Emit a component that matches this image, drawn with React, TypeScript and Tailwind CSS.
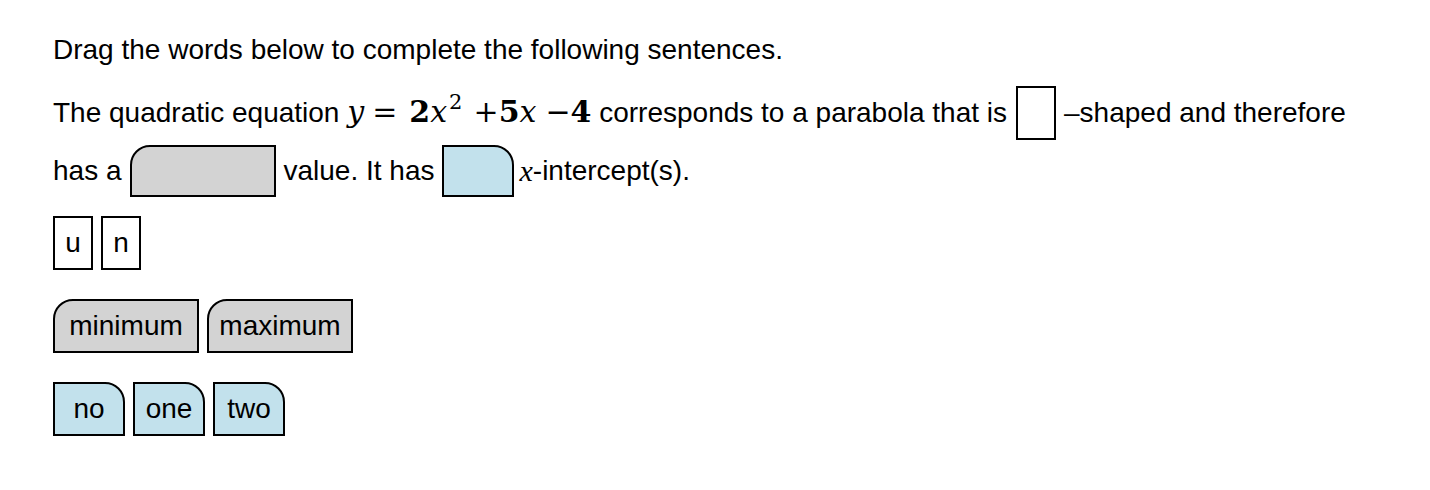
import React from "react";

const Box = ({ className = "", children }: { className?: string; children?: React.ReactNode }) => (
  <span className={`flex items-center justify-center border-2 border-black shrink-0 ${className}`}>{children}</span>
);

export default function App() {
  return (
    <div className="min-h-[490px] w-[1430px] bg-white font-['Liberation_Sans',Arial,sans-serif] text-[28px] text-black pl-[53px] pt-[33px]">
      <p className="leading-[34px] whitespace-pre">Drag the words below to complete the following sentences.</p>

      <div className="flex items-center h-[54px] mt-[19px] whitespace-pre leading-[32px]">
        <span>The quadratic equation </span>
        <span className="flex items-baseline font-['DejaVu_Serif',serif] text-[30px] leading-[32px]">
          <span className="italic">y</span>
          <span className="ml-[8px]">=</span>
          <span className="ml-[12px] font-bold">2</span>
          <span className="italic">x</span>
          <span className="text-[21px] relative -top-[13px] ml-[2px]">2</span>
          <span className="ml-[11px]">+</span>
          <span className="font-bold">5</span>
          <span className="italic">x</span>
          <span className="ml-[9px]">−</span>
          <span className="font-bold">4</span>
        </span>
        <span> corresponds to a parabola that is</span>
        <Box className="w-[40px] h-[54px] ml-[9px] mr-[8px] bg-white" />
        <span>–shaped and therefore</span>
      </div>

      <div className="flex items-center h-[52px] mt-[5px] whitespace-pre leading-[32px]">
        <span>has a</span>
        <Box className="w-[146px] h-[52px] mx-[8px] bg-[#d3d3d3] rounded-tl-[20px]" />
        <span>value. It has</span>
        <Box className="w-[72px] h-[52px] ml-[8px] mr-[5px] bg-[#c2e1ec] rounded-tr-[20px]" />
        <span className="font-['Liberation_Serif',serif] italic text-[30px]">x</span>
        <span>-intercept(s).</span>
      </div>

      <div className="flex gap-[8px] mt-[19px]">
        <Box className="w-[40px] h-[54px] bg-white">u</Box>
        <Box className="w-[40px] h-[54px] bg-white">n</Box>
      </div>

      <div className="flex gap-[8px] mt-[29px]">
        <Box className="w-[146px] h-[54px] bg-[#d3d3d3] rounded-tl-[20px]">minimum</Box>
        <Box className="w-[146px] h-[54px] bg-[#d3d3d3] rounded-tl-[20px]">maximum</Box>
      </div>

      <div className="flex gap-[8px] mt-[29px]">
        <Box className="w-[72px] h-[54px] bg-[#c2e1ec] rounded-tr-[20px]">no</Box>
        <Box className="w-[72px] h-[54px] bg-[#c2e1ec] rounded-tr-[20px]">one</Box>
        <Box className="w-[72px] h-[54px] bg-[#c2e1ec] rounded-tr-[20px]">two</Box>
      </div>
    </div>
  );
}
